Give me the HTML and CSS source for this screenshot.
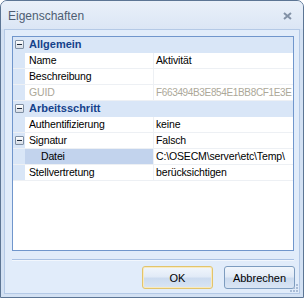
FILE: index.html
```html
<!DOCTYPE html>
<html>
<head>
<meta charset="utf-8">
<title>Eigenschaften</title>
<link rel="stylesheet" href="styles.css">
</head>
<body>
<div class="window">
  <div class="titlebar">
    <span class="title">Eigenschaften</span>
    <svg class="close" width="9" height="8" viewBox="0 0 9 8">
      <path d="M1 1 L8 7 M8 1 L1 7" stroke="#8291a6" stroke-width="2" fill="none"/>
    </svg>
  </div>

  <div class="client">
    <!-- property grid -->
    <div class="grid">
      <div class="row cat">
        <span class="gutter"><span class="toggle"></span></span>
        <span class="cat-name">Allgemein</span>
      </div>
      <div class="row">
        <span class="gutter"></span>
        <span class="name">Name</span>
        <span class="value">Aktivität</span>
      </div>
      <div class="row">
        <span class="gutter"></span>
        <span class="name">Beschreibung</span>
        <span class="value"></span>
      </div>
      <div class="row readonly">
        <span class="gutter"></span>
        <span class="name">GUID</span>
        <span class="value">F663494B3E854E1BB8CF1E3E</span>
      </div>
      <div class="row cat">
        <span class="gutter"><span class="toggle"></span></span>
        <span class="cat-name">Arbeitsschritt</span>
      </div>
      <div class="row">
        <span class="gutter"></span>
        <span class="name">Authentifizierung</span>
        <span class="value">keine</span>
      </div>
      <div class="row">
        <span class="gutter"></span>
        <span class="name"><span class="toggle inline"></span>Signatur</span>
        <span class="value">Falsch</span>
      </div>
      <div class="row selected">
        <span class="gutter"></span>
        <span class="name child">Datei</span>
        <span class="value">C:\OSECM\server\etc\Temp\</span>
      </div>
      <div class="row">
        <span class="gutter"></span>
        <span class="name">Stellvertretung</span>
        <span class="value">berücksichtigen</span>
      </div>
    </div>

    <div class="sep"></div>

    <div class="buttons">
      <button class="btn default">OK</button>
      <button class="btn">Abbrechen</button>
    </div>

    <svg class="grip" width="8" height="8" viewBox="0 0 8 8">
      <rect x="6" y="0" width="2" height="2" fill="#a9bcd6"/>
      <rect x="3" y="3" width="2" height="2" fill="#a9bcd6"/>
      <rect x="6" y="3" width="2" height="2" fill="#a9bcd6"/>
      <rect x="0" y="6" width="2" height="2" fill="#a9bcd6"/>
      <rect x="3" y="6" width="2" height="2" fill="#a9bcd6"/>
      <rect x="6" y="6" width="2" height="2" fill="#a9bcd6"/>
    </svg>
  </div>
</div>
</body>
</html>
```

FILE: styles.css
```css
/* page */
body {
  margin: 0;
  background: #ffffff;
  font-family: "Liberation Sans", Arial, sans-serif;
  font-size: 11px;
}

/* window frame */
.window {
  width: 304px;
  height: 298px;
  box-sizing: border-box;
  border: 1px solid #5c7594;
  border-radius: 7px 7px 0 0;
  background: #d3e1f3;
  display: flex;
  flex-direction: column;
}

.titlebar {
  height: 28px;
  display: flex;
  align-items: center;
  justify-content: space-between;
  padding: 0 11px 0 7px;
  border-radius: 6px 6px 0 0;
  background: linear-gradient(#e9f0f9, #dbe6f5);
}

.title {
  font-size: 12px;
  color: #4e5d72;
  padding-top: 1px;
}

.close {
  margin-top: 1px;
}

.client {
  position: relative;
  flex: 1;
  margin: 0 3px 3px;
  border: 1px solid #b4c9e6;
  background: #e1ecfa;
  padding: 6px 5px 4px 7px;
  display: flex;
  flex-direction: column;
}

/* property grid */
.grid {
  height: 215px;
  box-sizing: border-box;
  border: 1px solid #7096cc;
  background: #ffffff;
  overflow: hidden;
  font-size: 10.5px;
  letter-spacing: -0.15px;
}

.row {
  display: flex;
  height: 16px;
  box-sizing: border-box;
  border-bottom: 1px solid #edf0f4;
  line-height: 15px;
  white-space: nowrap;
}

.gutter {
  width: 12px;
  flex: none;
  background: #d9e6f7;
  position: relative;
}

.name {
  width: 129px;
  flex: none;
  box-sizing: border-box;
  padding-left: 4px;
  border-right: 1px solid #edf0f4;
  position: relative;
}

.name.child {
  padding-left: 16px;
}

.value {
  flex: 1;
  padding-left: 2px;
  overflow: hidden;
}

.cat {
  background: #d9e6f7;
  border-bottom-color: #d9e6f7;
}

.cat-name {
  padding-left: 4px;
  font-size: 11px;
  letter-spacing: 0;
  font-weight: bold;
  color: #15428b;
}

.readonly .name,
.readonly .value {
  color: #aca899;
}

.readonly .value {
  font-size: 10px;
  letter-spacing: -0.35px;
}

.selected .name {
  background: #c2d3ed;
}

/* expand / collapse box */
.toggle {
  position: absolute;
  left: 2px;
  top: 3px;
  width: 7px;
  height: 7px;
  border: 1px solid #7f8fa3;
  border-radius: 1px;
  background: linear-gradient(#ffffff, #d5dce6);
}

.toggle::after {
  content: "";
  position: absolute;
  left: 1px;
  top: 3px;
  width: 5px;
  height: 1px;
  background: #1e2a3a;
}

.toggle.inline {
  left: -10px;
}

.sep {
  margin-top: 8px;
  height: 1px;
  border-top: 1px solid #a9c1e3;
  background: #f2f7fd;
}

.buttons {
  margin-top: 5px;
  display: flex;
  justify-content: flex-end;
  gap: 11px;
  margin-right: -1px;
}

.btn {
  width: 71px;
  height: 23px;
  font-family: "Liberation Sans", Arial, sans-serif;
  font-size: 11px;
  color: #000000;
  border: 1px solid #7d9cbf;
  border-radius: 3px;
  background: linear-gradient(#f1f6fc 0%, #e2ebf7 45%, #ccdbef 55%, #d9e5f4 100%);
  padding: 0;
}

.btn.default {
  border-color: #e2c46c;
  box-shadow: inset 0 0 0 1px #f8eac0;
}

.grip {
  position: absolute;
  right: 1px;
  bottom: 1px;
}
```
